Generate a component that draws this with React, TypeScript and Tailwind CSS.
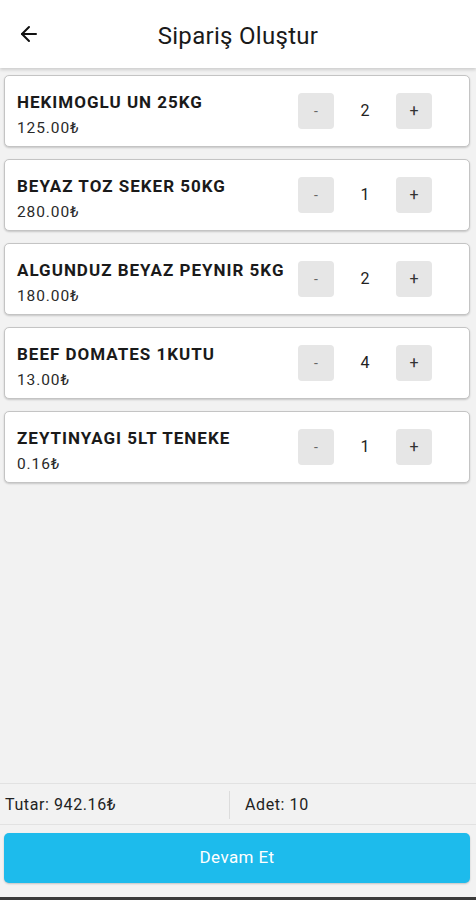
import { ArrowLeft } from 'lucide-react';

const items = [
  { name: 'HEKIMOGLU UN 25KG', price: '125.00₺', qty: 2 },
  { name: 'BEYAZ TOZ SEKER 50KG', price: '280.00₺', qty: 1 },
  { name: 'ALGUNDUZ BEYAZ PEYNIR 5KG', price: '180.00₺', qty: 2 },
  { name: 'BEEF DOMATES 1KUTU', price: '13.00₺', qty: 4 },
  { name: 'ZEYTINYAGI 5LT TENEKE', price: '0.16₺', qty: 1 },
];

function ItemCard({ name, price, qty }: { name: string; price: string; qty: number }) {
  return (
    <div className="h-[72px] flex items-center justify-between bg-white border border-[#c4c4c4] rounded-[5px] shadow-[0_1px_2px_rgba(0,0,0,0.18)] pl-[12px] pr-[37px]">
      <div className="flex flex-col pt-[7px]">
        <span className="text-[17px] font-bold text-[#1a1a1a] leading-[22px] tracking-[1px]">{name}</span>
        <span className="text-[15.5px] text-[#2a2a2a] leading-[22px] mt-[4px] tracking-[0.9px]">{price}</span>
      </div>
      <div className="flex items-center">
        <button className="w-9 h-9 rounded-[4px] bg-[#e6e6e6] text-[#666] text-[14px] flex items-center justify-center">-</button>
        <span className="w-[62px] text-center text-[16px] text-[#222]">{qty}</span>
        <button className="w-9 h-9 rounded-[4px] bg-[#e6e6e6] text-[#333] text-[16px] flex items-center justify-center">+</button>
      </div>
    </div>
  );
}

export default function App() {
  return (
    <div className="w-[476px] h-[900px] flex flex-col bg-[#f2f2f2] font-['Roboto',sans-serif]">
      <header className="h-[68px] bg-white flex items-center relative shadow-[0_2px_3px_rgba(0,0,0,0.15)] z-10">
        <div className="pl-[17px] w-[60px]">
          <ArrowLeft className="w-[24px] h-[24px] text-[#111]" strokeWidth={2} />
        </div>
        <h1 className="absolute left-0 right-0 top-[21px] text-center text-[24px] leading-[30px] text-[#1a1a1a] tracking-[0.3px] pointer-events-none">Sipariş Oluştur</h1>
      </header>

      <main className="flex-1 flex flex-col gap-3 pt-[7px] pl-1 pr-1.5">
        {items.map((it) => (
          <ItemCard key={it.name} {...it} />
        ))}
      </main>

      <footer className="flex flex-col">
        <div className="h-[42px] flex items-center border-t border-b border-[#e2e2e2] text-[16px] tracking-[0.6px] text-[#222] pt-[2px]">
          <div className="w-[230px] pl-[5px] border-r border-[#dcdcdc] h-[28px] flex items-center">Tutar: 942.16₺</div>
          <div className="pl-[15px]">Adet: 10</div>
        </div>
        <div className="pt-[8px] pb-[14px] pl-1 pr-1.5">
          <button className="w-full h-[50px] rounded-[5px] bg-[#1dbbec] text-white text-[17px] tracking-[0.4px] shadow-[0_1px_2px_rgba(0,0,0,0.2)]">Devam Et</button>
        </div>
        <div className="h-[3px] bg-[#3a3a3a]" />
      </footer>
    </div>
  );
}
